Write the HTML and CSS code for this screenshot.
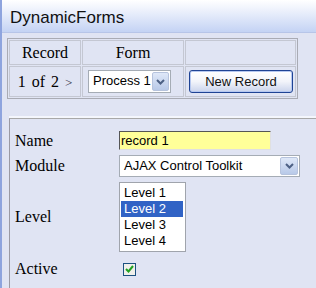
FILE: index.html
```html
<!DOCTYPE html>
<html lang="en">
<head>
    <meta charset="UTF-8">
    <title>DynamicForms</title>
<link rel="stylesheet" href="styles.css">
</head>
<body>

  <div class="header">DynamicForms</div>

  <table class="nav">
    <tr>
      <th class="c-rec">Record</th>
      <th class="c-form">Form</th>
      <th class="c-btn"></th>
    </tr>
    <tr>
      <td class="c-rec">1 of 2 <span class="next">&gt;</span></td>
      <td class="c-form">
        <div class="dd small">
          <span class="dd-text">Process 1</span>
          <span class="dd-arrow"><svg width="9" height="6" viewBox="0 0 9 6"><path d="M1 1 L4.5 4.5 L8 1" fill="none" stroke="#4d6185" stroke-width="2"/></svg></span>
        </div>
      </td>
      <td class="c-btn"><button class="btn">New Record</button></td>
    </tr>
  </table>

  <div class="panel">
    <div class="form">
      <div class="lbl">Name</div>
      <div class="field"><div class="txt">record 1</div></div>

      <div class="lbl">Module</div>
      <div class="field">
        <div class="dd wide">
          <span class="dd-text">AJAX Control Toolkit</span>
          <span class="dd-arrow"><svg width="9" height="6" viewBox="0 0 9 6"><path d="M1 1 L4.5 4.5 L8 1" fill="none" stroke="#4d6185" stroke-width="2"/></svg></span>
        </div>
      </div>

      <div class="lbl">Level</div>
      <div class="field">
        <div class="list">
          <div class="opt">Level 1</div>
          <div class="opt sel">Level 2</div>
          <div class="opt">Level 3</div>
          <div class="opt">Level 4</div>
        </div>
      </div>

      <div class="lbl">Active</div>
      <div class="field">
        <div class="chk"><svg width="9" height="8" viewBox="0 0 9 8"><path d="M1 4 L3.5 6.5 L8 1" fill="none" stroke="#21a121" stroke-width="2"/></svg></div>
      </div>
    </div>
  </div>

</body>
</html>
```

FILE: styles.css
```css
html {
  overflow: hidden;
}

body {
  margin: 0;
  padding: 0;
  height: 288px;
  overflow: hidden;
  background-color: #e0e4f3;
  border-left: 2px solid #8ea4de;
  font-family: "Liberation Serif", serif;
  color: black;
}

.header {
  height: 32px;
  line-height: 35px;
  padding-left: 8px;
  font-family: "Liberation Sans", sans-serif;
  font-size: 17px;
  color: #111;
  background: linear-gradient(#ffffff 0%, #eef2fc 30%, #c4d3f4 100%);
  border-bottom: 1px solid #b7c5e8;
}

.nav {
  margin: 5px 0 0 5px;
  width: 291px;
  border: 1px solid #a9abb4;
  border-spacing: 1px;
  font-size: 16px;
}

.nav th,
.nav td {
  border: 1px solid #c4c7d2;
  padding: 0;
  font-weight: normal;
  text-align: center;
}

.nav th {
  height: 23px;
}

.nav td {
  height: 29px;
  word-spacing: 2px;
}

.c-rec {
  width: 70px;
}

.c-form {
  width: 100px;
}

.next {
  font-size: 13px;
  color: #334;
}

.dd {
  display: flex;
  align-items: stretch;
  background: #fff;
  border: 1px solid #a5acb5;
  font-family: "Liberation Sans", sans-serif;
  font-size: 13px;
  box-sizing: border-box;
  text-align: left;
  word-spacing: 0;
}

.dd.small {
  width: 83px;
  height: 23px;
  margin-left: 5px;
}

.dd.wide {
  width: 181px;
  height: 22px;
}

.dd-text {
  flex: 1;
  padding-left: 4px;
  line-height: 20px;
  white-space: nowrap;
}

.dd-arrow {
  width: 16px;
  margin: 1px;
  display: flex;
  align-items: center;
  justify-content: center;
  background: linear-gradient(#dfe8f8, #b8c9e8);
  border: 1px solid #b6c3dd;
  border-radius: 2px;
}

.btn {
  width: 104px;
  height: 23px;
  padding: 0;
  margin-left: 1px;
  font-family: "Liberation Sans", sans-serif;
  font-size: 13px;
  word-spacing: 0;
  color: #111;
  border: 1px solid #1f4394;
  border-radius: 3px;
  background: linear-gradient(#ffffff 0%, #f2f4fa 50%, #c9d3ec 100%);
  box-shadow: inset 0 0 0 1px #b6c8f0;
}

.panel {
  margin: 19px 0 0 7px;
  padding: 12px 0 0 5px;
  border-top: 1px solid #a8a8a8;
  border-left: 1px solid #9a9aa4;
  box-shadow: 0 -2px 0 #f4f6fc;
  height: 160px;
}

.form {
  display: grid;
  grid-template-columns: 104px auto;
  grid-template-rows: 19px 22px 70px 24px;
  row-gap: 5px;
  align-items: center;
  font-size: 16px;
}

.txt {
  width: 152px;
  height: 19px;
  box-sizing: border-box;
  background: #ffff99;
  border-top: 1px solid #555;
  border-left: 1px solid #555;
  border-right: 1px solid #e0e0e0;
  border-bottom: 1px solid #e0e0e0;
  font-family: "Liberation Sans", sans-serif;
  font-size: 13px;
  line-height: 17px;
  padding-left: 1px;
}

.list {
  width: 67px;
  box-sizing: border-box;
  background: #fff;
  border: 1px solid #a0a4ac;
  padding: 2px 2px 2px 1px;
  font-family: "Liberation Sans", sans-serif;
  font-size: 13px;
}

.opt {
  height: 16px;
  line-height: 16px;
  padding-left: 3px;
}

.opt.sel {
  background: #3163c5;
  color: #fff;
}

.chk {
  width: 13px;
  height: 13px;
  margin-left: 4px;
  box-sizing: border-box;
  border: 1px solid #1c5180;
  background: #f0f0ea;
  display: flex;
  align-items: center;
  justify-content: center;
}
```
